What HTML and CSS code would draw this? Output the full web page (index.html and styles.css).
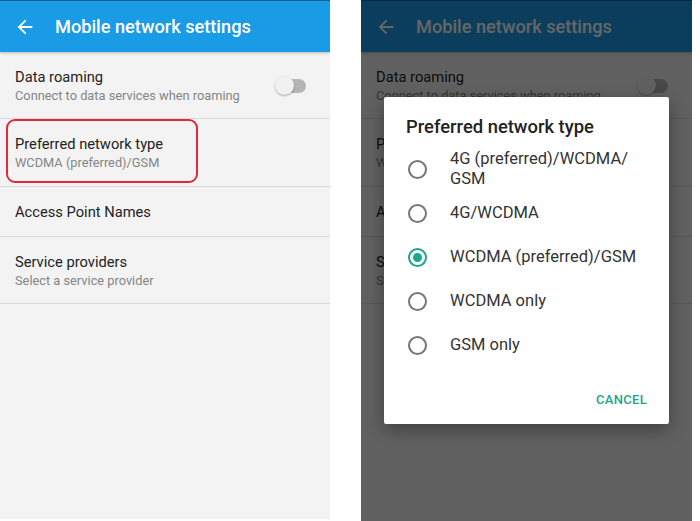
FILE: index.html
```html
<!DOCTYPE html>
<html>
<head>
<meta charset="utf-8">
<link rel="stylesheet" href="styles.css">
</head>
<body>
<div class="page">
  <section class="screen">
    <header class="appbar">
      <svg class="back" viewBox="0 0 24 24" width="22" height="22"><path d="M20 11H7.83l5.59-5.59L12 4l-8 8 8 8 1.41-1.41L7.83 13H20v-2z" fill="#fff"/></svg>
      <h1 class="title">Mobile network settings</h1>
    </header>
    <ul class="list">
      <li class="item item-toggle">
        <div class="texts">
          <div class="item-title">Data roaming</div>
          <div class="item-sub">Connect to data services when roaming</div>
        </div>
        <span class="switch"><span class="thumb"></span></span>
      </li>
      <li class="item item-marked">
        <div class="texts">
          <div class="item-title">Preferred network type</div>
          <div class="item-sub">WCDMA (preferred)/GSM</div>
        </div>
        <span class="mark"></span>
      </li>
      <li class="item item-single">
        <div class="item-title">Access Point Names</div>
      </li>
      <li class="item item-last">
        <div class="texts">
          <div class="item-title">Service providers</div>
          <div class="item-sub">Select a service provider</div>
        </div>
      </li>
    </ul>
  </section>

  <section class="screen screen-dim">
    <header class="appbar">
      <svg class="back" viewBox="0 0 24 24" width="22" height="22"><path d="M20 11H7.83l5.59-5.59L12 4l-8 8 8 8 1.41-1.41L7.83 13H20v-2z" fill="#fff"/></svg>
      <h1 class="title">Mobile network settings</h1>
    </header>
    <ul class="list">
      <li class="item item-toggle">
        <div class="texts">
          <div class="item-title">Data roaming</div>
          <div class="item-sub">Connect to data services when roaming</div>
        </div>
        <span class="switch"><span class="thumb"></span></span>
      </li>
      <li class="item">
        <div class="texts">
          <div class="item-title">Preferred network type</div>
          <div class="item-sub">WCDMA (preferred)/GSM</div>
        </div>
      </li>
      <li class="item item-single">
        <div class="item-title">Access Point Names</div>
      </li>
      <li class="item item-last">
        <div class="texts">
          <div class="item-title">Service providers</div>
          <div class="item-sub">Select a service provider</div>
        </div>
      </li>
    </ul>
    <div class="scrim"></div>
    <div class="dialog">
      <h2 class="dialog-title">Preferred network type</h2>
      <ul class="options">
        <li class="option"><span class="radio"></span><span class="opt-label">4G (preferred)/WCDMA/<br>GSM</span></li>
        <li class="option"><span class="radio"></span><span class="opt-label">4G/WCDMA</span></li>
        <li class="option"><span class="radio radio-on"></span><span class="opt-label">WCDMA (preferred)/GSM</span></li>
        <li class="option"><span class="radio"></span><span class="opt-label">WCDMA only</span></li>
        <li class="option"><span class="radio"></span><span class="opt-label">GSM only</span></li>
      </ul>
      <div class="actions"><span class="btn">CANCEL</span></div>
    </div>
  </section>
</div>
</body>
</html>
```

FILE: styles.css
```css
* { box-sizing: border-box; }
html, body { margin: 0; padding: 0; background: #fff; }
body { font-family: Roboto, "Noto Sans", sans-serif; }

.page {
  display: flex;
  gap: 31px;
  width: 700px;
  height: 521px;
}

.screen {
  position: relative;
  width: 330px;
  height: 519px;
  background: #f3f3f3;
  overflow: hidden;
}
.screen-dim { width: 331px; height: 521px; }

.appbar {
  position: relative;
  z-index: 1;
  height: 52px;
  background: #199be6;
  border-top: 1px solid #0d5f8f;
  display: flex;
  align-items: center;
  box-shadow: 0 1px 3px rgba(0,0,0,0.25);
}
.back { margin-left: 14px; margin-right: 19px; flex: none; }
.title {
  margin: 0;
  color: #fff;
  font-size: 18.2px;
  font-weight: 500;
  line-height: 24px;
}

.list { list-style: none; margin: 0; padding: 0; }
.item {
  position: relative;
  display: flex;
  align-items: center;
  padding: 15px 15px 14px;
  border-bottom: 1px solid #dadada;
}
.item-toggle { padding-bottom: 13px; }
.item-single { padding: 15px 15px 14px; }
.item-last { padding-bottom: 13px; }
.texts { flex: 1; }
.item-title { font-size: 14.7px; line-height: 20px; color: #222; }
.item-sub { font-size: 12.8px; line-height: 18px; color: #858585; }

.switch {
  position: relative;
  width: 30px;
  height: 14px;
  margin-right: 9px;
  border-radius: 7px;
  background: #b5b5b5;
  flex: none;
}
.thumb {
  position: absolute;
  left: -1px;
  top: -3px;
  width: 19px;
  height: 19px;
  border-radius: 50%;
  background: #f1f1f1;
  box-shadow: 0 1px 2px rgba(0,0,0,0.3);
}

.mark {
  position: absolute;
  left: 6px;
  top: 0;
  width: 192px;
  height: 64px;
  border: 2px solid #e2283a;
  border-radius: 9px;
}

.scrim {
  position: absolute;
  inset: 0;
  z-index: 2;
  background: rgba(0,0,0,0.6);
}

.dialog {
  position: absolute;
  z-index: 3;
  left: 23px;
  top: 97px;
  width: 285px;
  height: 327px;
  background: #fff;
  border-radius: 2px;
  box-shadow: 0 6px 18px rgba(0,0,0,0.35);
  display: flex;
  flex-direction: column;
}
.dialog-title {
  margin: 0;
  padding: 18px 22px 8px;
  font-size: 18.4px;
  font-weight: 500;
  line-height: 24px;
  color: #222;
}
.options { list-style: none; margin: 0; padding: 0; }
.option {
  height: 44px;
  display: flex;
  align-items: center;
  padding-left: 24px;
}
.radio {
  width: 19px;
  height: 19px;
  border-radius: 50%;
  border: 2px solid #767676;
  margin-right: 23px;
  flex: none;
  position: relative;
}
.radio-on { border-color: #1ba78a; }
.radio-on::after {
  content: "";
  position: absolute;
  left: 3px;
  top: 3px;
  width: 9px;
  height: 9px;
  border-radius: 50%;
  background: #1ba78a;
}
.opt-label { font-size: 16.5px; line-height: 20px; color: #333; }

.actions {
  flex: 1;
  display: flex;
  align-items: center;
  justify-content: flex-end;
  padding: 8px 22px 0 0;
}
.btn {
  color: #1ba78a;
  font-size: 13px;
  font-weight: 500;
  letter-spacing: 0.3px;
}
```
